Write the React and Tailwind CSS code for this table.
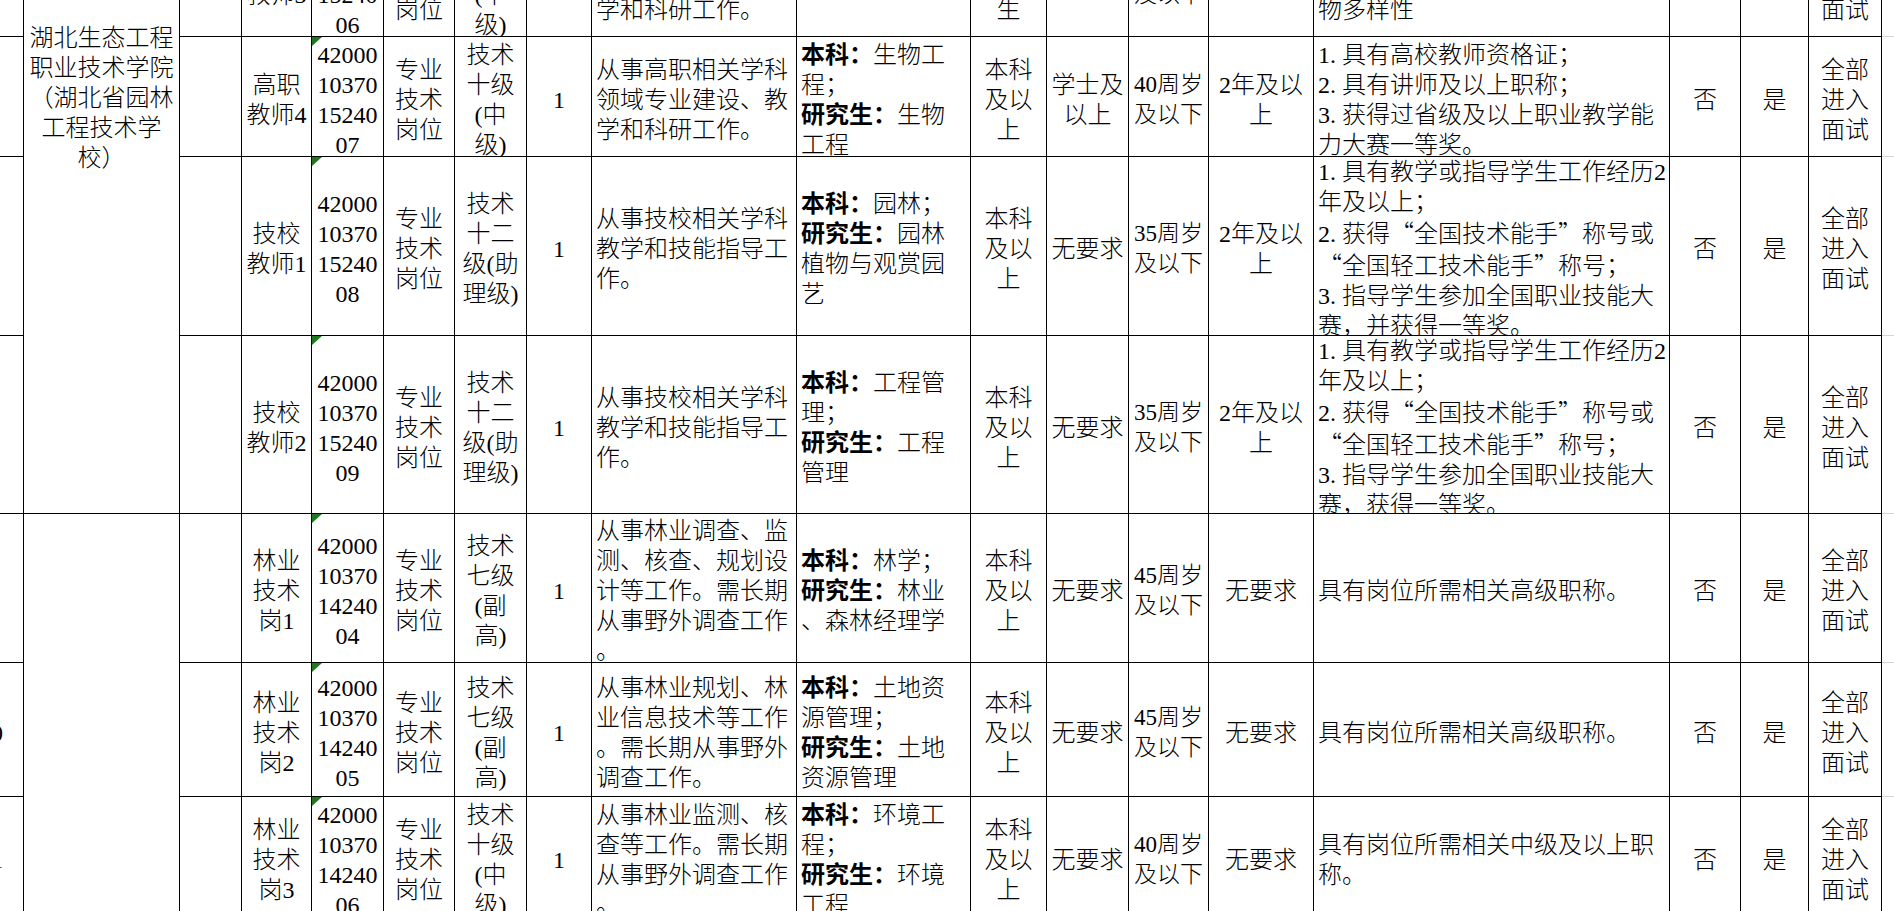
import React from "react";

// spreadsheet screenshot: a recruitment table scrolled part-way, so the grid
// starts above and left of the viewport and gets clipped by the wrapper
const GRID_COLS =
  "grid-cols-[60px_156px_62px_70px_72px_71px_72px_65px_205px_174px_76px_82px_80px_105px_356px_71px_68px_73px_100px]";
const GRID_ROWS = "grid-rows-[240px_120px_120px_179px_178px_149px_134px_120px]";

const B = ({ children }) => <b className="font-bold">{children}</b>;
const Q = ({ children }) => (
  <span className="font-['Noto_Sans_CJK_SC',sans-serif] [font-feature-settings:'fwid']">
    {children}
  </span>
);

const CAT = ["专业", "技术", "岗位"];
const EDU = ["本科", "及以", "上"];
const IV = ["全部", "进入", "面试"];

const OTHER_SKILL = (last) => [
  "1. 具有教学或指导学生工作经历2",
  "年及以上；",
  <>
    2. 获得<Q>“</Q>全国技术能手<Q>”</Q>称号或
  </>,
  <>
    <Q>“</Q>全国轻工技术能手<Q>”</Q>称号；
  </>,
  "3. 指导学生参加全国职业技能大",
  last,
];

const rows = [
  {
    pos: ["高职", "教师3"],
    code: ["42000", "10370", "15240", "06"],
    grade: ["技术", "十级", "(中", "级)"],
    duties: ["从事高职相关学科", "领域专业建设、教", "学和科研工作。"],
    major: [
      <>
        <B>研究生：</B>生态学
      </>,
    ],
    edu: ["硕士", "研究", "生"],
    degree: ["硕士"],
    age: ["35周岁", "及以下"],
    exp: ["无要求"],
    other: ["1. 具有高校教师资格证；", "2. 研究方向为林业生态或生", "物多样性"],
  },
  {
    pos: ["高职", "教师4"],
    code: ["42000", "10370", "15240", "07"],
    grade: ["技术", "十级", "(中", "级)"],
    duties: ["从事高职相关学科", "领域专业建设、教", "学和科研工作。"],
    major: [
      <>
        <B>本科：</B>生物工
      </>,
      "程；",
      <>
        <B>研究生：</B>生物
      </>,
      "工程",
    ],
    edu: EDU,
    degree: ["学士及", "以上"],
    age: ["40周岁", "及以下"],
    exp: ["2年及以", "上"],
    other: [
      "1. 具有高校教师资格证；",
      "2. 具有讲师及以上职称；",
      "3. 获得过省级及以上职业教学能",
      "力大赛一等奖。",
    ],
  },
  {
    pos: ["技校", "教师1"],
    code: ["42000", "10370", "15240", "08"],
    grade: ["技术", "十二", "级(助", "理级)"],
    duties: ["从事技校相关学科", "教学和技能指导工", "作。"],
    major: [
      <>
        <B>本科：</B>园林；
      </>,
      <>
        <B>研究生：</B>园林
      </>,
      "植物与观赏园",
      "艺",
    ],
    edu: EDU,
    degree: ["无要求"],
    age: ["35周岁", "及以下"],
    exp: ["2年及以", "上"],
    other: OTHER_SKILL("赛，并获得一等奖。"),
  },
  {
    pos: ["技校", "教师2"],
    code: ["42000", "10370", "15240", "09"],
    grade: ["技术", "十二", "级(助", "理级)"],
    duties: ["从事技校相关学科", "教学和技能指导工", "作。"],
    major: [
      <>
        <B>本科：</B>工程管
      </>,
      "理；",
      <>
        <B>研究生：</B>工程
      </>,
      "管理",
    ],
    edu: EDU,
    degree: ["无要求"],
    age: ["35周岁", "及以下"],
    exp: ["2年及以", "上"],
    other: OTHER_SKILL("赛，获得一等奖。"),
  },
  {
    pos: ["林业", "技术", "岗1"],
    code: ["42000", "10370", "14240", "04"],
    grade: ["技术", "七级", "(副", "高)"],
    duties: ["从事林业调查、监", "测、核查、规划设", "计等工作。需长期", "从事野外调查工作", "。"],
    major: [
      <>
        <B>本科：</B>林学；
      </>,
      <>
        <B>研究生：</B>林业
      </>,
      "、森林经理学",
    ],
    edu: EDU,
    degree: ["无要求"],
    age: ["45周岁", "及以下"],
    exp: ["无要求"],
    other: ["具有岗位所需相关高级职称。"],
  },
  {
    left: ["30"],
    pos: ["林业", "技术", "岗2"],
    code: ["42000", "10370", "14240", "05"],
    grade: ["技术", "七级", "(副", "高)"],
    duties: ["从事林业规划、林", "业信息技术等工作", "。需长期从事野外", "调查工作。"],
    major: [
      <>
        <B>本科：</B>土地资
      </>,
      "源管理；",
      <>
        <B>研究生：</B>土地
      </>,
      "资源管理",
    ],
    edu: EDU,
    degree: ["无要求"],
    age: ["45周岁", "及以下"],
    exp: ["无要求"],
    other: ["具有岗位所需相关高级职称。"],
  },
  {
    left: ["31"],
    pos: ["林业", "技术", "岗3"],
    code: ["42000", "10370", "14240", "06"],
    grade: ["技术", "十级", "(中", "级)"],
    duties: ["从事林业监测、核", "查等工作。需长期", "从事野外调查工作", "。"],
    major: [
      <>
        <B>本科：</B>环境工
      </>,
      "程；",
      <>
        <B>研究生：</B>环境
      </>,
      "工程",
    ],
    edu: EDU,
    degree: ["无要求"],
    age: ["40周岁", "及以下"],
    exp: ["无要求"],
    other: ["具有岗位所需相关中级及以上职", "称。"],
  },
];

function Flag() {
  return (
    <svg className="absolute left-0 top-0" width="10" height="9" viewBox="0 0 10 9">
      <polygon points="0,0 10,0 0,9" fill="#1f7a1f" />
    </svg>
  );
}

function Cell({ lines = [], left = false, right = false, flag = false, className = "" }) {
  let place = "justify-center text-center";
  if (left) place = "justify-start pl-[4px] text-left";
  if (right) place = "justify-end pr-[20px] text-right";

  return (
    <div
      className={`relative flex items-center overflow-hidden border-b border-r border-black pt-[6px] ${place} ${className}`}
    >
      {flag && <Flag />}
      <div className="whitespace-nowrap leading-[30px]">
        {lines.map((l, i) => (
          <div key={i}>{l}</div>
        ))}
      </div>
    </div>
  );
}

const Gridline = () => <div className="border-b border-[#d4d4d4]" />;

function Row({ r }) {
  return (
    <>
      <Cell lines={r.left} right />
      {r.unit}
      <Cell />
      <Cell lines={r.pos} />
      <Cell lines={r.code} flag />
      <Cell lines={CAT} />
      <Cell lines={r.grade} />
      <Cell lines={["1"]} />
      <Cell lines={r.duties} left />
      <Cell lines={r.major} left />
      <Cell lines={r.edu} />
      <Cell lines={r.degree} />
      <Cell lines={r.age} className="text-[23px]" />
      <Cell lines={r.exp} />
      <Cell lines={r.other} left />
      <Cell lines={["否"]} />
      <Cell lines={["是"]} />
      <Cell lines={IV} />
      <Gridline />
    </>
  );
}

const App = () => {
  const schoolCell = (
    <Cell
      className="row-span-5"
      lines={["湖北生态工程", "职业技术学院", "（湖北省园林", "工程技术学", "校）"]}
    />
  );
  const forestCell = <Cell className="row-span-3" />;

  return (
    <div className="h-[911px] w-[1894px] overflow-hidden bg-white">
      <div
        className={`-ml-[36px] -mt-[323px] grid w-max ${GRID_COLS} ${GRID_ROWS} font-['Liberation_Serif','Noto_Sans_CJK_SC',serif] text-[24px] font-light text-black`}
      >
        {/* rows scrolled out of view above; only its merged school cell shows */}
        <Cell />
        {schoolCell}
        {Array.from({ length: 16 }).map((_, i) => (
          <Cell key={i} />
        ))}
        <Gridline />

        {rows.map((r, i) => (
          <Row key={i} r={i === 4 ? { ...r, unit: forestCell } : r} />
        ))}
      </div>
    </div>
  );
};

export default App;
